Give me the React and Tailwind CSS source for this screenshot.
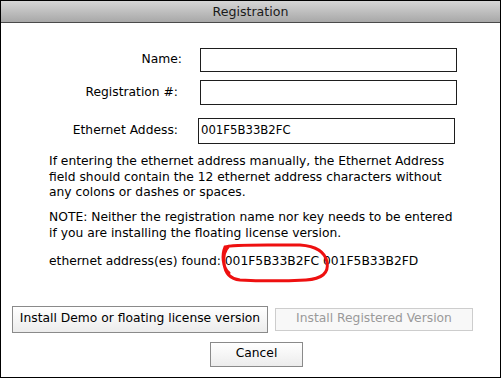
import React from "react";

const font = { fontFamily: '"DejaVu Sans", Verdana, sans-serif' };

const Field = ({ label, labelW, inputX, h, value, mt }) => (
  <div className={`flex items-center ${mt}`}>
    <div className="text-right shrink-0" style={{ width: labelW }}>
      {label}
    </div>
    <div
      className={`shrink-0 border border-[#1e1e1e] bg-white flex items-center pl-[2px] text-[11.7px] ${h}`}
      style={{ marginLeft: inputX - labelW - 1, width: 257 }}
    >
      {value}
    </div>
  </div>
);

export default function App() {
  return (
    <div
      className="relative w-[501px] h-[378px] bg-white border border-black text-black text-[12.3px] leading-[15.5px]"
      style={font}
    >
      {/* Title bar */}
      <div className="h-[22px] border-b border-[#4a4a4a] bg-gradient-to-b from-[#d6d6d6] to-[#a8a8a8] flex items-center justify-center text-[#1a1a1a] text-[12.6px]">
        Registration
      </div>

      {/* Fields */}
      <div className="pt-[25px]">
        <Field label="Name:" labelW={181} inputX={200} h="h-[24px]" mt="" />
        <Field
          label="Registration #:"
          labelW={177}
          inputX={200}
          h="h-[25px]"
          mt="mt-[8px]"
        />
        <Field
          label="Ethernet Addess:"
          labelW={177}
          inputX={198}
          h="h-[26px]"
          value="001F5B33B2FC"
          mt="mt-[13px]"
        />
      </div>

      {/* Notes */}
      <div className="pl-[48px]">
        <p className="mt-[10px]">
          If entering the ethernet address manually, the Ethernet Address
          <br />
          field should contain the 12 ethernet address characters without
          <br />
          any colons or dashes or spaces.
        </p>
        <p className="mt-[9.5px]">
          NOTE: Neither the registration name nor key needs to be entered
          <br />
          if you are installing the floating license version.
        </p>
        <p className="mt-[13px]">
          ethernet address(es) found: 001F5B33B2FC 001F5B33B2FD
        </p>
      </div>

      {/* Buttons */}
      <div className="mt-[36px] pl-[11px] flex items-center gap-[7px]">
        <button className="w-[256px] h-[27px] border border-[#8a8a8a] bg-gradient-to-b from-[#ffffff] to-[#ececec] text-[12.3px] text-black">
          Install Demo or floating license version
        </button>
        <button
          disabled
          className="w-[198px] h-[23px] border border-[#cdcdcd] bg-[#f8f8f8] text-[12.3px] text-[#9a9a9a]"
        >
          Install Registered Version
        </button>
      </div>
      <div className="mt-[9px] pl-[209px]">
        <button className="w-[93px] h-[25px] border border-[#8a8a8a] bg-gradient-to-b from-[#ffffff] to-[#ececec] text-[12.3px] text-black">
          Cancel
        </button>
      </div>

      {/* Red hand-drawn annotation */}
      <svg
        className="absolute left-[-1px] top-[-1px] pointer-events-none"
        width="501"
        height="378"
        viewBox="0 0 501 378"
      >
        <path
          d="M229 273 C222 267, 222 254, 225 247 C232 244, 262 245, 300 245 C316 246, 325 252, 327 262 C329 273, 322 279, 306 280 C286 281, 258 281, 240 280 C230 279, 225 273, 224 263 C223 255, 225 250, 229 246"
          fill="none"
          stroke="#ee1010"
          strokeWidth="3"
          strokeLinecap="round"
        />
      </svg>
    </div>
  );
}
